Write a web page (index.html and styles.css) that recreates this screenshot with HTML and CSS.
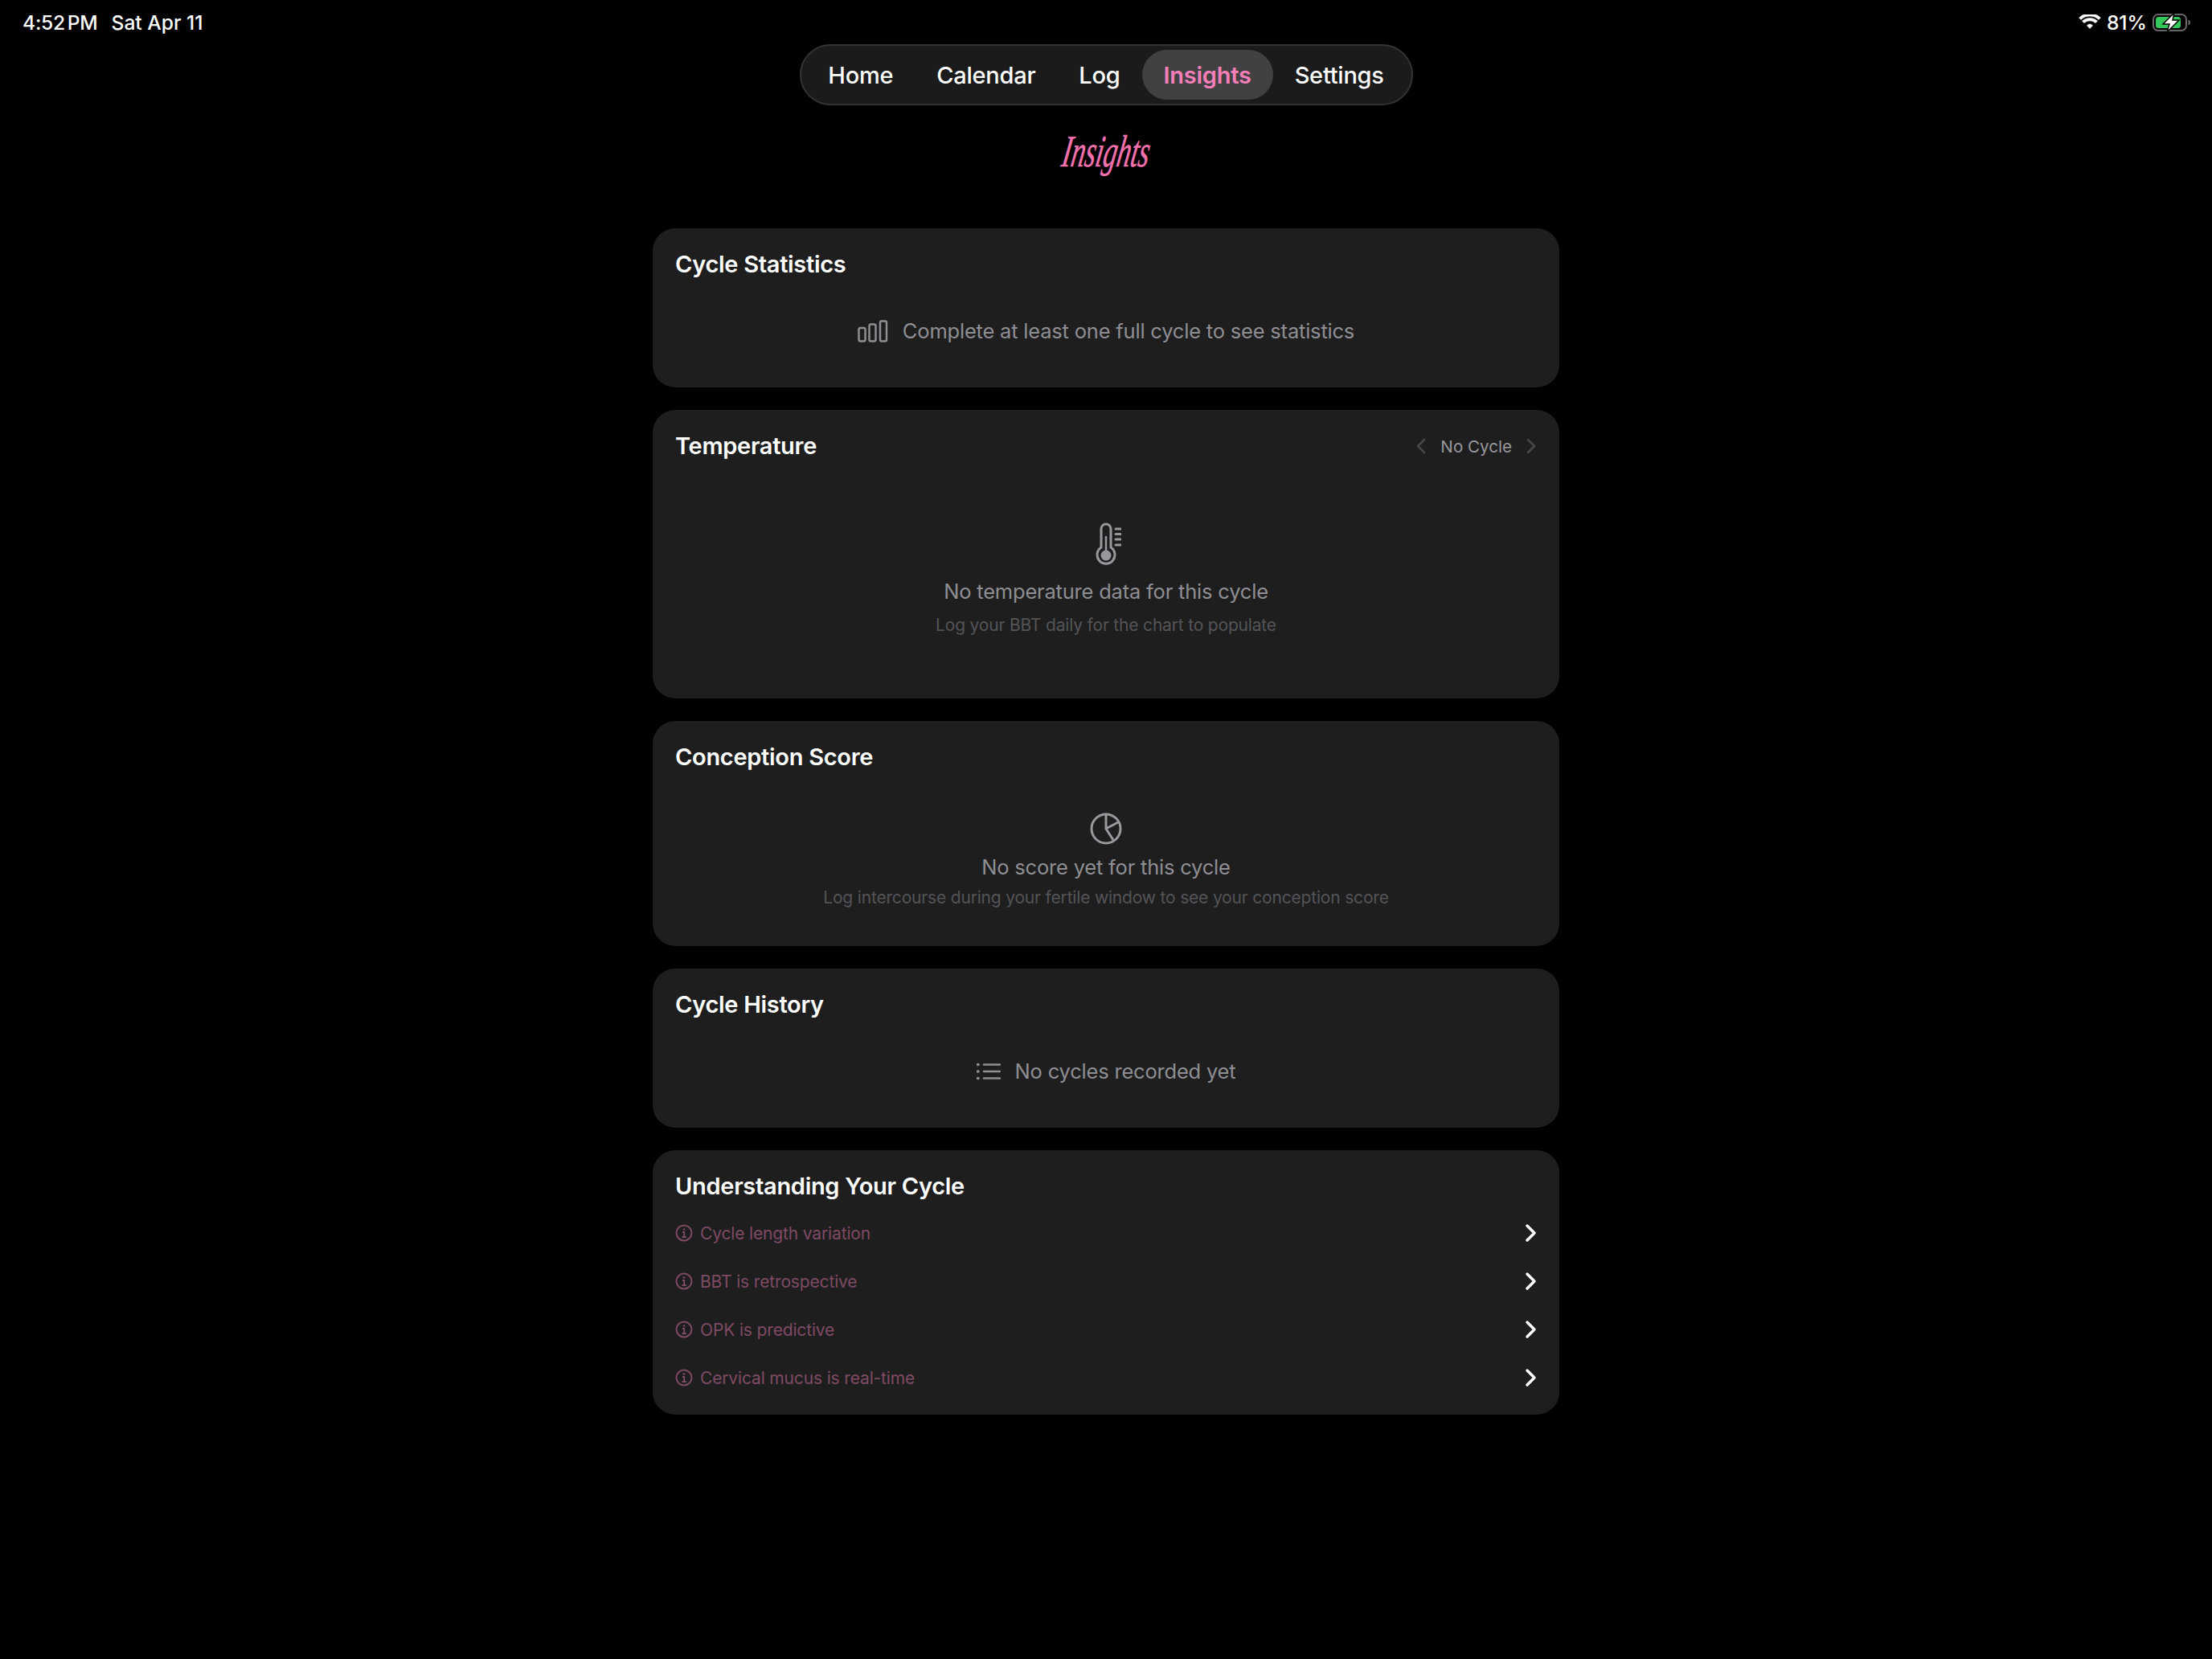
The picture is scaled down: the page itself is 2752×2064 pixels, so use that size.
FILE: index.html
```html
<!DOCTYPE html>
<html lang="en">
<head>
<meta charset="utf-8">
<title>Insights</title>
<link rel="stylesheet" href="styles.css">
</head>
<body>
<div class="status">
  <div class="status-left"><span class="time">4:52 PM</span><span>Sat Apr 11</span></div>
  <div class="status-right">
    <svg class="wifi" width="28" height="20" viewBox="0 0 28 20"><path d="M14 17.5l-3.6-3.8a5.4 5.4 0 0 1 7.2 0z M6.9 10.6l-2.4-2.5a14 14 0 0 1 19 0l-2.4 2.5a10.6 10.6 0 0 0-14.200 0z M2.900 6.400L.6 4a19.500 19.500 0 0 1 26.800 0l-2.300 2.400a16.200 16.200 0 0 0-22.200 0z" fill="#fff" stroke="#fff" stroke-width=".6"/></svg>
    <span>81%</span>
    <svg class="battery" width="48" height="24" viewBox="0 0 48 24">
      <rect x="1" y="2" width="41" height="20" rx="6" fill="none" stroke="#666" stroke-width="2"/>
      <rect x="4" y="5" width="31" height="14" rx="3.500" fill="#34c759"/>
      <path d="M44.500 8.500c1.500.5 2.500 1.800 2.500 3.500s-1 3-2.500 3.500z" fill="#666"/>
      <path d="M27 0L13 14h8l-3 10 15-15h-8z" fill="#fff" stroke="#000" stroke-width="1.500"/>
    </svg>
  </div>
</div>

<nav class="nav">
  <a class="nav-item">Home</a>
  <a class="nav-item">Calendar</a>
  <a class="nav-item">Log</a>
  <a class="nav-item active">Insights</a>
  <a class="nav-item">Settings</a>
</nav>

<h1 class="page-title"><span>Insights</span></h1>

<main class="cards">
  <section class="card card-stats">
    <h2 class="card-title">Cycle Statistics</h2>
    <div class="inline-empty">
      <svg width="38" height="28" viewBox="0 0 38 28" fill="none" stroke="#8e8e93" stroke-width="2.500"><rect x="1.500" y="10" width="8" height="16.500" rx="2"/><rect x="14.500" y="5.500" width="8" height="21" rx="2"/><rect x="28" y="1.500" width="8" height="25" rx="2"/></svg>
      <span>Complete at least one full cycle to see statistics</span>
    </div>
  </section>

  <section class="card card-temp">
    <div class="card-head">
      <h2 class="card-title">Temperature</h2>
      <div class="cycle-nav">
        <svg width="14" height="20" viewBox="0 0 14 20" fill="none" stroke="#48484a" stroke-width="2.500" stroke-linecap="round" stroke-linejoin="round"><path d="M11 2L3 10l8 8"/></svg>
        <span>No Cycle</span>
        <svg width="14" height="20" viewBox="0 0 14 20" fill="none" stroke="#48484a" stroke-width="2.500" stroke-linecap="round" stroke-linejoin="round"><path d="M3 2l8 8-8 8"/></svg>
      </div>
    </div>
    <div class="empty empty-temp">
      <svg class="empty-icon thermo" width="32" height="54" viewBox="0 0 32 54" fill="none" stroke="#98989d" stroke-width="3" stroke-linecap="round">
        <path d="M7 31V8a6 6 0 0 1 12 0v23a11 11 0 1 1-12 0z"/>
        <path d="M13 18v22" stroke-width="2.500"/>
        <circle cx="13" cy="41" r="6.500" fill="#98989d" stroke="none"/>
        <path d="M25 8h6M25 14.500h6M25 21h6M25 28h6"/>
      </svg>
      <p class="empty-main">No temperature data for this cycle</p>
      <p class="empty-sub">Log your BBT daily for the chart to populate</p>
    </div>
  </section>

  <section class="card card-score">
    <h2 class="card-title">Conception Score</h2>
    <div class="empty empty-score">
      <svg class="empty-icon" width="40" height="40" viewBox="0 0 40 40" fill="none" stroke="#98989d" stroke-width="3" stroke-linecap="round" stroke-linejoin="round">
        <circle cx="20" cy="20" r="18"/>
        <path d="M20 2v18l15-8M20 20l9 14"/>
      </svg>
      <p class="empty-main">No score yet for this cycle</p>
      <p class="empty-sub">Log intercourse during your fertile window to see your conception score</p>
    </div>
  </section>

  <section class="card card-history">
    <h2 class="card-title">Cycle History</h2>
    <div class="inline-empty list-empty">
      <svg width="30" height="22" viewBox="0 0 30 22" fill="none" stroke="#8e8e93" stroke-width="2.500" stroke-linecap="round"><path d="M9 2.500h20M9 11h20M9 19.500h20"/><path d="M1.500 2.500h.5M1.500 11h.5M1.500 19.500h.5" stroke-width="3.500"/></svg>
      <span>No cycles recorded yet</span>
    </div>
  </section>

  <section class="card card-learn">
    <h2 class="card-title">Understanding Your Cycle</h2>
    <ul class="rows">
      <li class="row"><svg class="info" width="22" height="22" viewBox="0 0 22 22" fill="none" stroke="#7f4a63" stroke-width="2"><circle cx="11" cy="11" r="9.500"/><path d="M9 10h2.200v6M8.500 16h5.200" stroke-width="1.800"/><circle cx="11" cy="6.500" r="1.300" fill="#7f4a63" stroke="none"/></svg><span class="row-label">Cycle length variation</span><svg class="chev" width="16" height="24" viewBox="0 0 16 24" fill="none" stroke="#fff" stroke-width="3.500" stroke-linecap="round" stroke-linejoin="round"><path d="M3 3l9 9-9 9"/></svg></li>
      <li class="row"><svg class="info" width="22" height="22" viewBox="0 0 22 22" fill="none" stroke="#7f4a63" stroke-width="2"><circle cx="11" cy="11" r="9.500"/><path d="M9 10h2.200v6M8.500 16h5.200" stroke-width="1.800"/><circle cx="11" cy="6.500" r="1.300" fill="#7f4a63" stroke="none"/></svg><span class="row-label">BBT is retrospective</span><svg class="chev" width="16" height="24" viewBox="0 0 16 24" fill="none" stroke="#fff" stroke-width="3.500" stroke-linecap="round" stroke-linejoin="round"><path d="M3 3l9 9-9 9"/></svg></li>
      <li class="row"><svg class="info" width="22" height="22" viewBox="0 0 22 22" fill="none" stroke="#7f4a63" stroke-width="2"><circle cx="11" cy="11" r="9.500"/><path d="M9 10h2.200v6M8.500 16h5.200" stroke-width="1.800"/><circle cx="11" cy="6.500" r="1.300" fill="#7f4a63" stroke="none"/></svg><span class="row-label">OPK is predictive</span><svg class="chev" width="16" height="24" viewBox="0 0 16 24" fill="none" stroke="#fff" stroke-width="3.500" stroke-linecap="round" stroke-linejoin="round"><path d="M3 3l9 9-9 9"/></svg></li>
      <li class="row"><svg class="info" width="22" height="22" viewBox="0 0 22 22" fill="none" stroke="#7f4a63" stroke-width="2"><circle cx="11" cy="11" r="9.500"/><path d="M9 10h2.200v6M8.500 16h5.200" stroke-width="1.800"/><circle cx="11" cy="6.500" r="1.300" fill="#7f4a63" stroke="none"/></svg><span class="row-label">Cervical mucus is real-time</span><svg class="chev" width="16" height="24" viewBox="0 0 16 24" fill="none" stroke="#fff" stroke-width="3.500" stroke-linecap="round" stroke-linejoin="round"><path d="M3 3l9 9-9 9"/></svg></li>
    </ul>
  </section>
</main>
</body>
</html>
```
FILE: styles.css
```css
* { box-sizing: border-box; }
html, body { margin: 0; padding: 0; }
body {
  min-height: 2064px;
  background: #000;
  color: #fff;
  font-family: Inter, "Noto Sans", sans-serif;
  overflow: hidden;
}
p, h1, h2, ul { margin: 0; padding: 0; }

.status {
  height: 55px;
  padding: 13px 26px 0 28px;
  display: flex;
  justify-content: space-between;
  font-size: 24.6px;
  line-height: 30px;
  font-weight: 500;
}
.status-left { display: flex; gap: 17px; }
.time { word-spacing: -3.5px; letter-spacing: -.25px; }
.status-right { display: flex; align-items: center; height: 30px; gap: 7px; }

.nav {
  width: 763px;
  height: 76px;
  margin: 0 auto;
  padding: 5px 0 0;
  display: flex;
  justify-content: center;
  align-items: flex-start;
  background: #1b1b1c;
  border: 2px solid #333335;
  border-radius: 38px;
}
.nav-item {
  height: 62px;
  padding: 0 27px;
  display: flex;
  align-items: center;
  font-size: 29px;
  letter-spacing: -.25px;
  font-weight: 500;
  color: #fff;
  border-radius: 31px;
}
.nav-item.active { background: #414143; color: #f47fb8; font-weight: 600; }

.page-title {
  height: 153px;
  padding-top: 30px;
  display: flex;
  justify-content: center;
  font-family: "Liberation Serif", serif;
  font-size: 56px;
  line-height: 54px;
  font-style: italic;
  font-weight: 400;
  color: #f272ae;
}
.page-title span {
  display: block;
  margin-left: -11px;
  transform: scaleX(.61) skewX(-16deg);
  -webkit-text-stroke: .6px #f272ae;
}

.cards {
  width: 1128px;
  margin: 0 auto;
  display: flex;
  flex-direction: column;
  gap: 28px;
}
.card {
  background: #1e1e1f;
  border-radius: 28px;
  padding: 26px 28px 0;
}
.card-stats { height: 198px; }
.card-temp { height: 359px; }
.card-score { height: 280px; }
.card-history { height: 198px; }
.card-learn { height: 329px; }

.card-title { font-size: 29px; letter-spacing: -.3px; line-height: 38px; font-weight: 600; color: #fff; }
.card-head { display: flex; justify-content: space-between; align-items: center; }

.cycle-nav {
  display: flex;
  align-items: center;
  gap: 17px;
  font-size: 20.6px;
  color: #98989d;
}

.inline-empty {
  margin-top: 46px;
  display: flex;
  justify-content: center;
  align-items: center;
  gap: 18px;
  font-size: 25.5px;
  letter-spacing: -.2px;
  line-height: 36px;
  color: #8e8e93;
}

.empty { display: flex; flex-direction: column; align-items: center; }
.empty-temp { padding-top: 76px; }
.empty-score { padding-top: 50px; }
.empty-icon { display: block; }
.thermo { margin-left: 6px; }
.empty-main { font-size: 25.5px; letter-spacing: -.2px; line-height: 36px; color: #8e8e93; }
.empty-sub { font-size: 21px; letter-spacing: -.18px; line-height: 30px; color: #545457; }
.empty-temp .empty-main { margin-top: 14px; }
.empty-temp .empty-sub { margin-top: 9px; }
.empty-score .empty-main { margin-top: 10px; }
.empty-score .empty-sub { margin-top: 5px; }

.rows { list-style: none; margin-top: 9px; }
.row { height: 60px; display: flex; align-items: center; }
.row-label { flex: 1; margin-left: 9px; font-size: 21px; letter-spacing: -.15px; color: #7f4a63; }
.chev { margin-right: -1px; }
```
